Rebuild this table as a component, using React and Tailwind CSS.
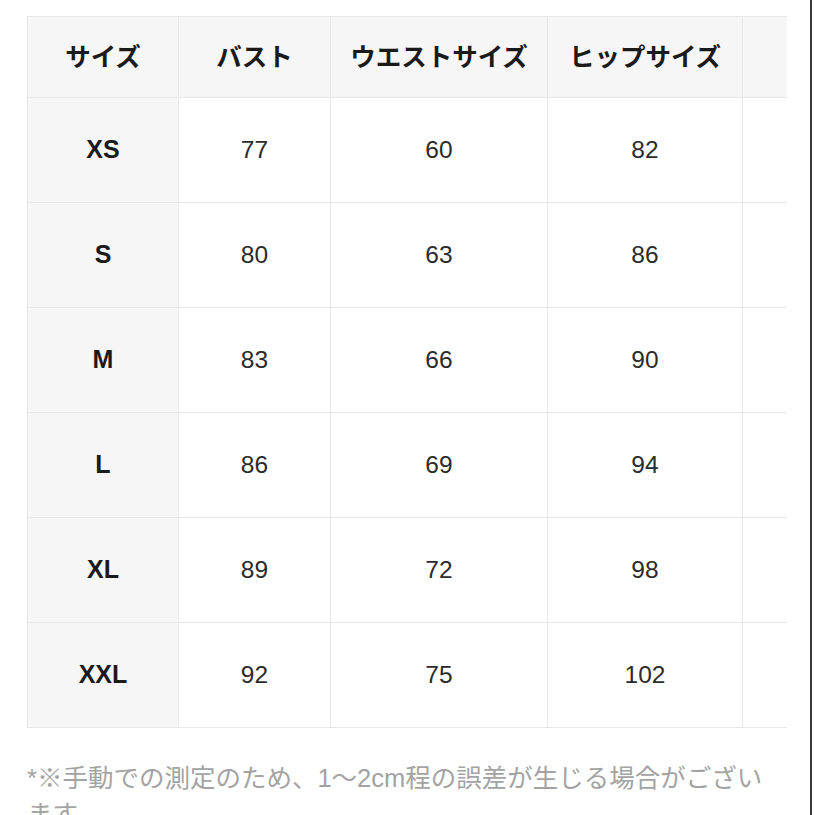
import React from "react";

const rows = [
  ["XS", "77", "60", "82"],
  ["S", "80", "63", "86"],
  ["M", "83", "66", "90"],
  ["L", "86", "69", "94"],
  ["XL", "89", "72", "98"],
  ["XXL", "92", "75", "102"],
];

export default function App() {
  return (
    <div
      className="h-[815px] w-[815px] overflow-hidden bg-white flex"
      style={{ fontFamily: '"Liberation Sans", "Noto Sans CJK JP", sans-serif' }}
    >
      <div className="w-[812px] h-full border-r-2 border-[#3a3a3a] shrink-0">
        <div className="ml-[27px] mt-[16px] w-[760px] overflow-hidden">
          <table className="table-fixed border-collapse w-[815px]">
            <colgroup>
              <col className="w-[151px]" />
              <col className="w-[152px]" />
              <col className="w-[217px]" />
              <col className="w-[195px]" />
              <col className="w-[100px]" />
            </colgroup>
            <thead>
              <tr className="h-[81px] bg-[#f6f6f6]">
                {["サイズ", "バスト", "ウエストサイズ", "ヒップサイズ", ""].map((h, i) => (
                  <th
                    key={i}
                    className="border border-[#e8e8e8] text-[25.5px] font-bold text-[#1a1a1a] text-center align-middle p-0"
                  >
                    {h}
                  </th>
                ))}
              </tr>
            </thead>
            <tbody>
              {rows.map((r) => (
                <tr key={r[0]} className="h-[105px]">
                  <td className="border border-[#e8e8e8] bg-[#f6f6f6] text-[25px] font-bold text-[#1a1a1a] text-center align-middle p-0">
                    {r[0]}
                  </td>
                  {r.slice(1).map((v, i) => (
                    <td
                      key={i}
                      className="border border-[#e8e8e8] text-[24.5px] text-[#2b2b2b] text-center align-middle p-0"
                    >
                      {v}
                    </td>
                  ))}
                  <td className="border border-[#e8e8e8] p-0"></td>
                </tr>
              ))}
            </tbody>
          </table>
        </div>
        <p className="ml-[27px] mt-[32px] w-[755px] text-[25.5px] leading-[36px] text-[#a3a3a3]">
          *※手動での測定のため、1～2cm程の誤差が生じる場合がございます
        </p>
      </div>
    </div>
  );
}
